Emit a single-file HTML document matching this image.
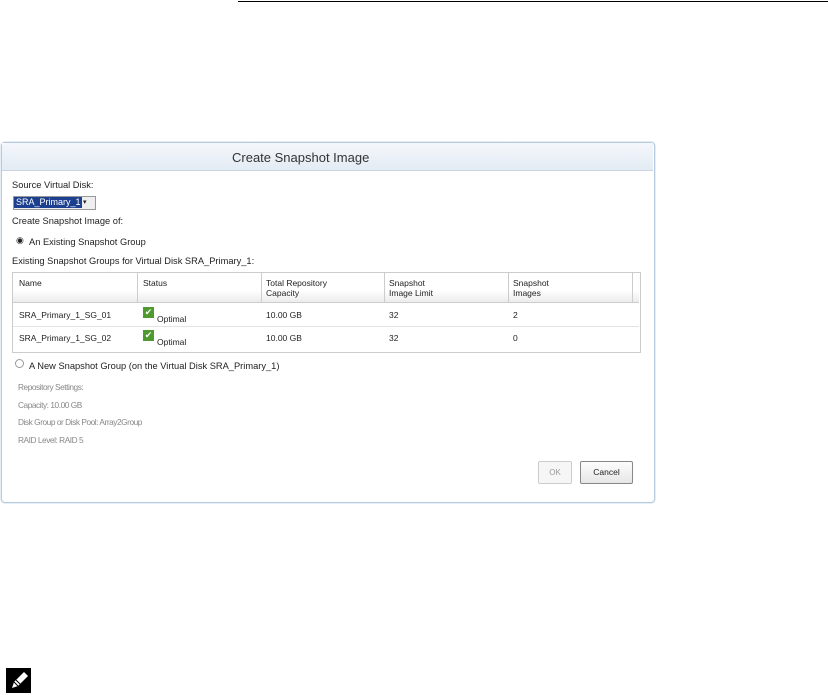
<!DOCTYPE html>
<html><head><style>
body{margin:0;width:828px;height:695px;background:#fff;position:relative;overflow:hidden;font-family:"Liberation Sans",sans-serif;font-size:8.5px;color:#222}
.a{position:absolute;white-space:nowrap}
.l{font-size:9.3px}
.g{color:#888;font-size:8.3px;letter-spacing:-0.45px}
</style></head><body>
<div class="a" style="left:238px;top:1px;width:590px;height:1px;background:#000"></div>
<div class="a" style="left:1px;top:142px;width:652px;height:359px;border:1px solid #b7c9dc;border-radius:4px;background:#fff;box-shadow:0 0 0 1px #e6eef6"></div>
<div class="a" style="left:2px;top:143px;width:651px;height:27px;background:linear-gradient(#f4f7fb,#e3ebf4);border-bottom:1px solid #c9d5e2"></div>
<div class="a" style="left:232px;top:150px;font-size:13px;color:#333">Create Snapshot Image</div>
<div class="a l" style="left:12px;top:180px">Source Virtual Disk:</div>
<div class="a" style="left:13px;top:196px;width:81px;height:12px;border:1px solid #999;background:#eee"></div>
<div class="a" style="left:14px;top:197px;width:66px;height:11px;background:#1c3f8f;color:#fff;padding-left:2px;line-height:11px;font-size:9px">SRA_Primary_1</div>
<div class="a" style="left:83px;top:198px;font-size:7px">▾</div>
<div class="a l" style="left:12px;top:216px">Create Snapshot Image of:</div>
<div class="a" style="left:16px;top:235px;font-size:9px">◉</div>
<div class="a l" style="left:29px;top:237px">An Existing Snapshot Group</div>
<div class="a l" style="left:12px;top:256px">Existing Snapshot Groups for Virtual Disk SRA_Primary_1:</div>
<div class="a" style="left:12px;top:272px;width:627px;height:79px;border:1px solid #ccc"></div>
<div class="a" style="left:13px;top:273px;width:626px;height:29px;background:linear-gradient(#fff 60%,#ececec);border-bottom:1px solid #ccc"></div>
<div class="a" style="left:137px;top:273px;width:1px;height:29px;background:#ccc"></div>
<div class="a" style="left:261px;top:273px;width:1px;height:29px;background:#ccc"></div>
<div class="a" style="left:384px;top:273px;width:1px;height:29px;background:#ccc"></div>
<div class="a" style="left:508px;top:273px;width:1px;height:29px;background:#ccc"></div>
<div class="a" style="left:632px;top:273px;width:1px;height:29px;background:#ccc"></div>
<div class="a" style="left:19px;top:278px">Name</div>
<div class="a" style="left:143px;top:278px">Status</div>
<div class="a" style="left:266px;top:278px;line-height:10px">Total Repository<br>Capacity</div>
<div class="a" style="left:389px;top:278px;line-height:10px">Snapshot<br>Image Limit</div>
<div class="a" style="left:513px;top:278px;line-height:10px">Snapshot<br>Images</div>
<div class="a" style="left:13px;top:326px;width:626px;height:1px;background:#e4e4e4"></div>
<div class="a" style="left:19px;top:310px">SRA_Primary_1_SG_01</div>
<div class="a" style="left:143px;top:307px;width:11px;height:11px;background:#4e9a2e;color:#fff;font-size:9px;line-height:11px;text-align:center">✔</div>
<div class="a" style="left:157px;top:314px">Optimal</div>
<div class="a" style="left:266px;top:310px">10.00 GB</div>
<div class="a" style="left:389px;top:310px">32</div>
<div class="a" style="left:513px;top:310px">2</div>
<div class="a" style="left:19px;top:333px">SRA_Primary_1_SG_02</div>
<div class="a" style="left:143px;top:330px;width:11px;height:11px;background:#4e9a2e;color:#fff;font-size:9px;line-height:11px;text-align:center">✔</div>
<div class="a" style="left:157px;top:337px">Optimal</div>
<div class="a" style="left:266px;top:333px">10.00 GB</div>
<div class="a" style="left:389px;top:333px">32</div>
<div class="a" style="left:513px;top:333px">0</div>
<div class="a" style="left:15px;top:359px;width:7px;height:7px;border:1px solid #999;border-radius:50%"></div>
<div class="a l" style="left:29px;top:361px">A New Snapshot Group (on the Virtual Disk SRA_Primary_1)</div>
<div class="a g" style="left:18px;top:382px">Repository Settings:</div>
<div class="a g" style="left:18px;top:400px">Capacity: 10.00 GB</div>
<div class="a g" style="left:18px;top:417px">Disk Group or Disk Pool: Array2Group</div>
<div class="a g" style="left:18px;top:435px">RAID Level: RAID 5</div>
<div class="a" style="left:538px;top:461px;width:32px;height:21px;border:1px solid #ccc;border-radius:2px;text-align:center;line-height:21px;background:#f6f6f6;font-size:8px;color:#999">OK</div>
<div class="a" style="left:580px;top:461px;width:51px;height:21px;border:1px solid #888;border-radius:2px;text-align:center;line-height:21px;background:linear-gradient(#fdfdfd,#e6e6e6)">Cancel</div>
<div class="a" style="left:6px;top:668px;width:25px;height:25px;background:#000"></div>
<svg class="a" style="left:6px;top:668px" width="25" height="25"><path d="M6 20 L8 14 L18 4 L22 8 L12 18 Z" fill="#fff"/><path d="M8 14 L12 18 M10 12 L14 16" stroke="#000" stroke-width="1" fill="none"/></svg>
</body></html>
